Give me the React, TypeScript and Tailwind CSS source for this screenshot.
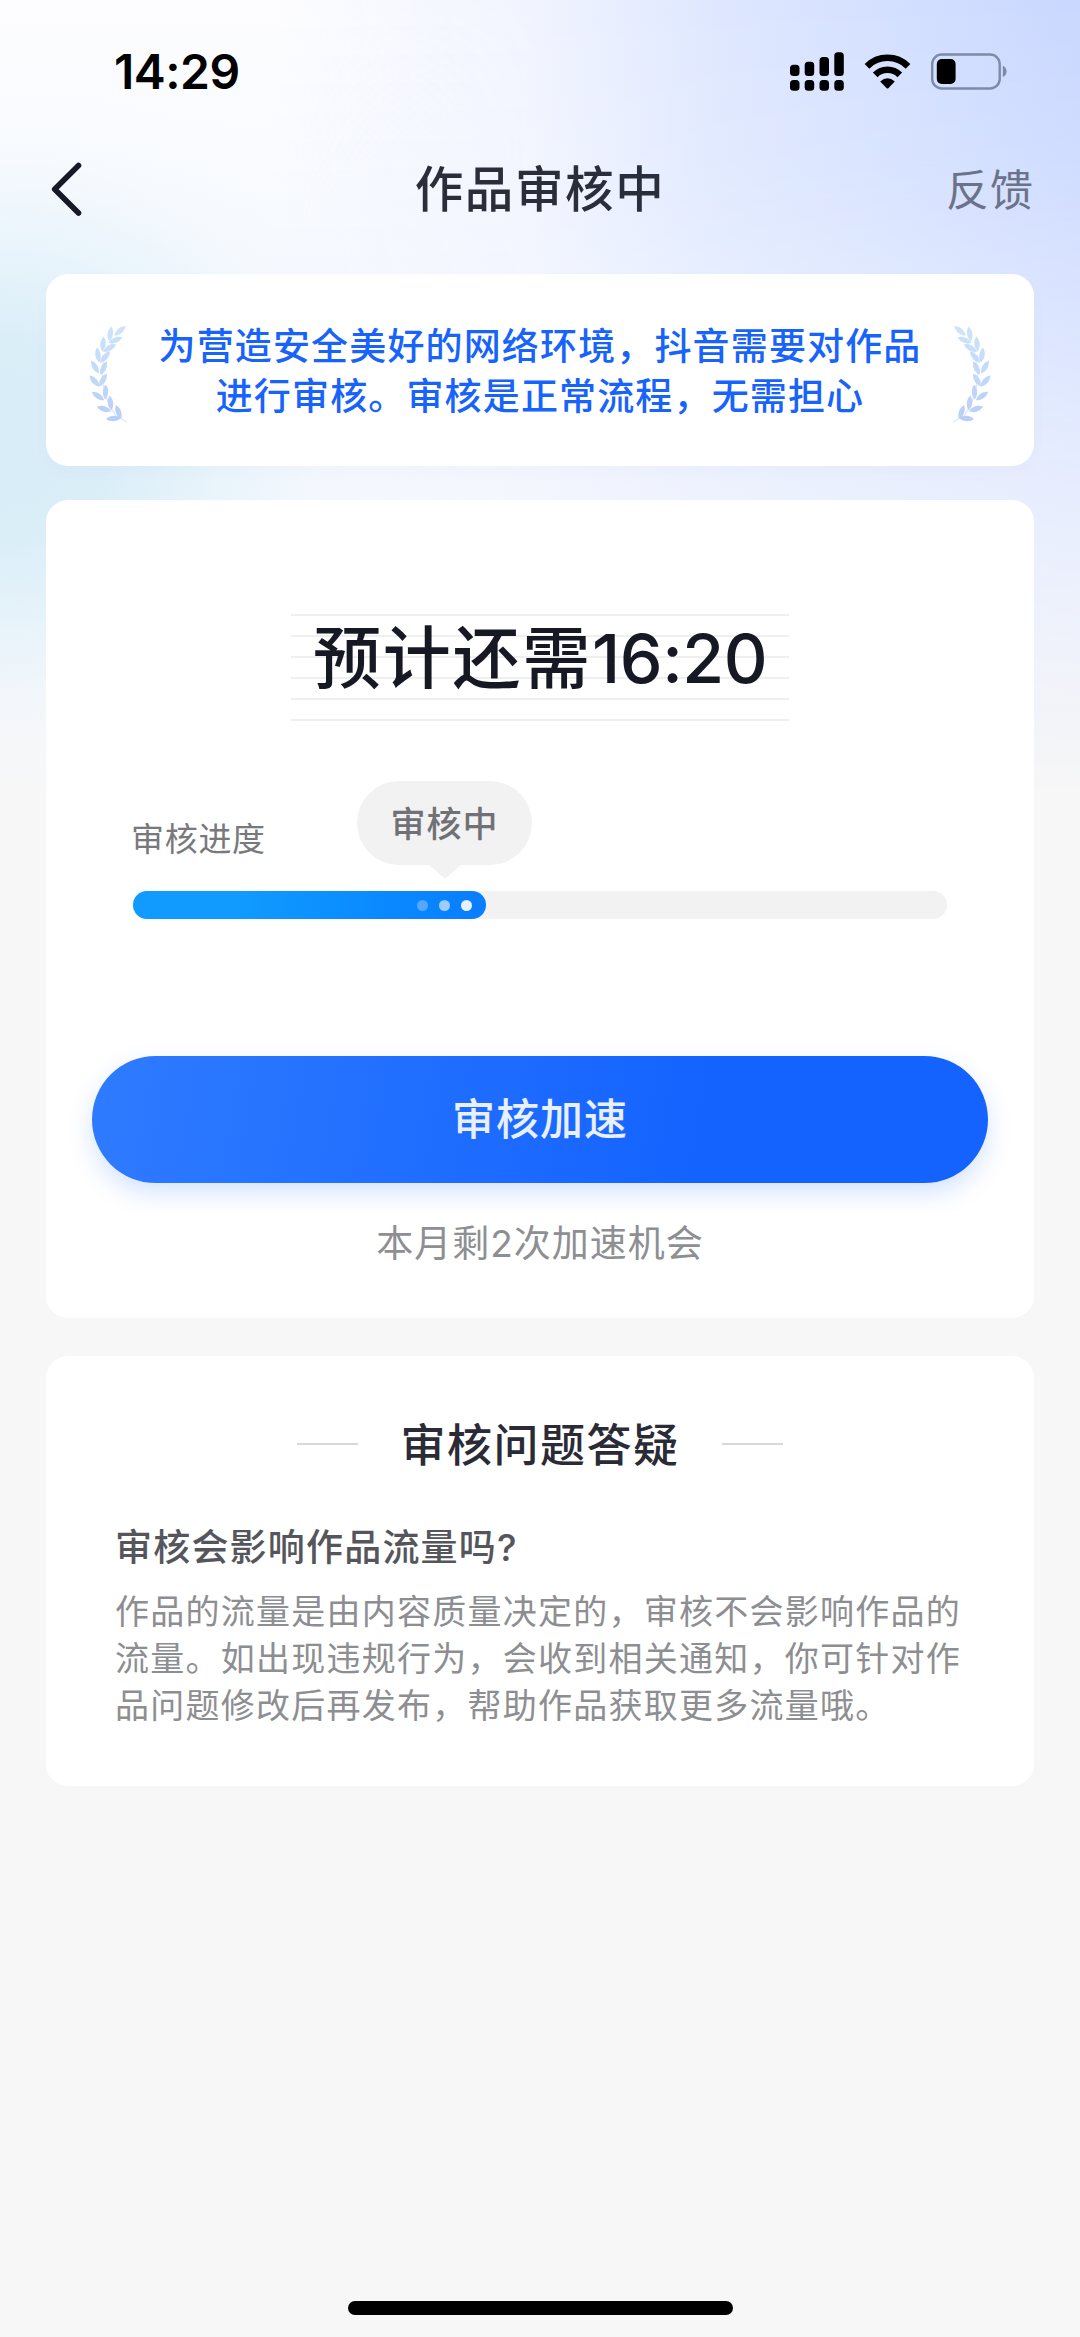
const F = "font-['Inter','Noto_Sans_CJK_SC',sans-serif]";

type Leaf = [number, number, number];

const leaves: Leaf[] = [
  [44, 15.7, 50], [34.3, 19, 8], [39.5, 25, 68], [27, 29, 5], [33.5, 33, 60], [22, 40, -8], [29, 42, 42],
  [19, 52, -30], [27.5, 53, 25], [18.5, 66, -42], [27, 65, 30], [22, 81, -55], [29.5, 77, 2],
  [28, 94, -72], [34.5, 88, -6], [37.5, 103.5, -94], [42.5, 97, -20],
];

function leafColor(y: number) {
  const t = y / 110;
  return `rgb(${Math.round(207 - 24 * t)} ${Math.round(231 - 26 * t)} ${Math.round(251 - 4 * t)})`;
}

function Laurel({ flip = false }: { flip?: boolean }) {
  return (
    <svg viewBox="0 0 64 120" className={flip ? 'mt-[10px] h-[120px] w-[64px] -scale-x-100' : 'mt-[10px] h-[120px] w-[64px]'}>
      <path d="M38 26C24 42 20 72 40 101L51 107" fill="none" stroke="#dfeafc" strokeWidth="1.4" />
      {leaves.map(([x, y, r], i) => (
        <path key={i} transform={`translate(${x} ${y}) rotate(${r})`} fill={leafColor(y)} d="M0-7.500C3.600-3 3.600 3 0 7.500C-3.600 3-3.600-3 0-7.500Z" />
      ))}
    </svg>
  );
}

function StatusBar() {
  return (
    <div className="flex h-[144px] items-center justify-between pl-[114px] pr-[73px]">
      <div className="text-[48px] font-semibold leading-none tracking-[-0.5px] text-black">14:29</div>
      <svg viewBox="0 0 220 42" className="h-[42px] w-[220px]">
        <g fill="#000">
          <rect x="3" y="13.700" width="9.500" height="11.300" rx="3.500" />
          <rect x="17.700" y="10.700" width="9.500" height="14.300" rx="3.500" />
          <rect x="32.500" y="6" width="9.500" height="19" rx="3.500" />
          <rect x="47.300" y="1.300" width="9.500" height="23.700" rx="3.500" />
          <rect x="3" y="29" width="9.500" height="10.700" rx="3.500" />
          <rect x="17.700" y="29" width="9.500" height="10.700" rx="3.500" />
          <rect x="32.500" y="29" width="9.500" height="10.700" rx="3.500" />
          <rect x="47.300" y="29" width="9.500" height="10.700" rx="3.500" />
          <path d="M93.200 30.500Q100.500 23.800 107.800 30.500L101.300 37.200Q100.500 38 99.700 37.200Z" />
        </g>
        <g fill="none" stroke="#000" strokeWidth="6.600">
          <path d="M80 15.300A29 29 0 0 1 121 15.300" />
          <path d="M88.200 23.800A17.500 17.500 0 0 1 112.800 23.800" />
        </g>
        <rect x="145.200" y="3.500" width="67.500" height="34" rx="9.500" fill="none" stroke="#7e8ba6" strokeWidth="2.400" />
        <rect x="149.800" y="8" width="18.800" height="25" rx="5" fill="#000" />
        <path d="M215.800 14.700C220.800 16.500 220.800 24.200 215.800 26Z" fill="#7e8ba6" />
      </svg>
    </div>
  );
}

export default function App() {
  return (
    <div className={`relative isolate flex h-[2337px] w-[1080px] flex-col overflow-hidden bg-[#f7f7f7] ${F}`}>
      <div className="absolute inset-x-0 top-0 -z-10 h-[840px] bg-[linear-gradient(180deg,#fdfdff_0%,#f7faff_30%,#f6f8fe_60%,#f7f7f7_95%)]" />
      <div className="absolute inset-x-0 top-0 -z-10 h-[800px] bg-[linear-gradient(92deg,#f1f4ff00_25%,#f1f4ff_48%,#dee7ff_65%,#d1deff_84%,#c8d6ff_100%)] [mask-image:linear-gradient(180deg,#000_0%,#000d_20%,#000a_35%,#0006_55%,#0003_75%,transparent_100%)]" />
      <div className="absolute inset-x-0 top-0 -z-10 h-[860px] bg-[radial-gradient(ellipse_440px_390px_at_0px_440px,#d8edf8_0%,#daeef8_25%,#e3f2fab0_50%,#f0f7fd50_72%,#f5f9fe18_88%,#f7f9ff00_100%)]" />

      <StatusBar />

      <header className="grid h-[90px] grid-cols-[1fr_auto_1fr] items-center pl-[46px] pr-[46px]">
        <svg viewBox="0 0 40 60" className="h-[60px] w-[40px]" fill="none" stroke="#171a26" strokeWidth="5.600" strokeLinecap="round" strokeLinejoin="round">
          <path d="M32.500 6.500L8.700 30.200L32.500 54" />
        </svg>
        <h1 className="pt-[3px] text-[48.500px] font-medium leading-none tracking-[1.600px] text-[#2a2d3a]">作品审核中</h1>
        <div className="justify-self-end pt-[3px] text-[43px] leading-none tracking-[1px] text-[#6b7389]">反馈</div>
      </header>

      <main className="flex flex-col px-[46px] pt-[40px]">
        <section className="flex h-[192px] items-center justify-between rounded-[22px] bg-white px-[30px] shadow-[0_6px_20px_#1a4a8a05]">
          <Laurel />
          <p className="pt-[4px] text-center text-[37px] font-medium leading-[50px] tracking-[1.150px] text-[#1763fb]">
            为营造安全美好的网络环境，抖音需要对作品<br />进行审核。审核是正常流程，无需担心
          </p>
          <Laurel flip />
        </section>

        <section className="mt-[34px] flex h-[818px] flex-col rounded-[22px] bg-white px-[46px]">
          <div className="mt-[114px] flex h-[107px] w-[498px] items-start justify-center self-center bg-[repeating-linear-gradient(180deg,#efeff0_0px,#efeff0_2px,transparent_2px,transparent_21px)]">
            <div className="whitespace-nowrap text-[68px] font-medium leading-[88px] text-[#161823]">
              <span className="tracking-[1.800px]">预计还需</span>
              <span className="text-[68px] tracking-[-0.500px]">16:20</span>
            </div>
          </div>

          <div className="mt-[60px] flex h-[98px] items-start pl-[40px]">
            <div className="-ml-px mt-[40px] w-[226px] text-[33px] leading-[36px] tracking-[0.700px] text-[#78797c]">审核进度</div>
            <div className="flex flex-col items-center">
              <div className="flex h-[84px] w-[175px] items-center justify-center rounded-full bg-[#f2f2f2] pt-[2px] text-[35px] font-medium tracking-[1px] text-[#707176]">审核中</div>
              <svg viewBox="0 0 36 16" className="-mt-[2px] h-[16px] w-[36px]"><path d="M0 0H36L20 14Q18 16 16 14Z" fill="#f2f2f2" /></svg>
            </div>
          </div>
          <div className="mx-[41px] mt-[12px] h-[28px] rounded-full bg-[#f2f2f2]">
            <div className="flex h-full w-[353px] items-center justify-end gap-[11px] rounded-full bg-gradient-to-r from-[#119aff] from-30% to-[#0a7dff] pr-[14px]">
              <i className="size-[11px] rounded-full bg-white/30" />
              <i className="size-[11px] rounded-full bg-white/60" />
              <i className="size-[11px] rounded-full bg-white/90" />
            </div>
          </div>

          <button className="mt-[137px] h-[127px] w-[896px] rounded-full bg-[linear-gradient(100deg,#2f7bff_0%,#1463ff_68%)] text-[43px] font-medium tracking-[1px] text-white/90 shadow-[0_10px_24px_#1463ff2e]">审核加速</button>
          <p className="mt-[39px] text-center text-[37px] leading-[44px] tracking-[1px] text-[#8e8f92]">本月剩2次加速机会</p>
        </section>

        <section className="mt-[38px] h-[430px] rounded-[22px] bg-white px-[69px] pt-[60px]">
          <div className="flex h-[56px] items-center justify-center gap-[42px]">
            <span className="h-[2px] w-[61px] bg-[#d8d8da]" />
            <h2 className="pt-[4px] text-[45px] font-medium leading-[56px] tracking-[1.500px] text-[#2a2b36]">审核问题答疑</h2>
            <span className="h-[2px] w-[61px] bg-[#d8d8da]" />
          </div>
          <h3 className="mt-[54px] text-[37px] font-medium leading-[44px] tracking-[1.200px] text-[#55565c]">审核会影响作品流量吗?</h3>
          <p className="mt-[18px] whitespace-nowrap text-[34px] leading-[47.200px] tracking-[1.250px] text-[#8d8e91]">
            作品的流量是由内容质量决定的，审核不会影响作品的<br />流量。如出现违规行为，会收到相关通知，你可针对作<br />品问题修改后再发布，帮助作品获取更多流量哦。
          </p>
        </section>
      </main>

      <div className="mb-[22px] mt-auto h-[14px] w-[385px] self-center rounded-full bg-black" />
    </div>
  );
}
